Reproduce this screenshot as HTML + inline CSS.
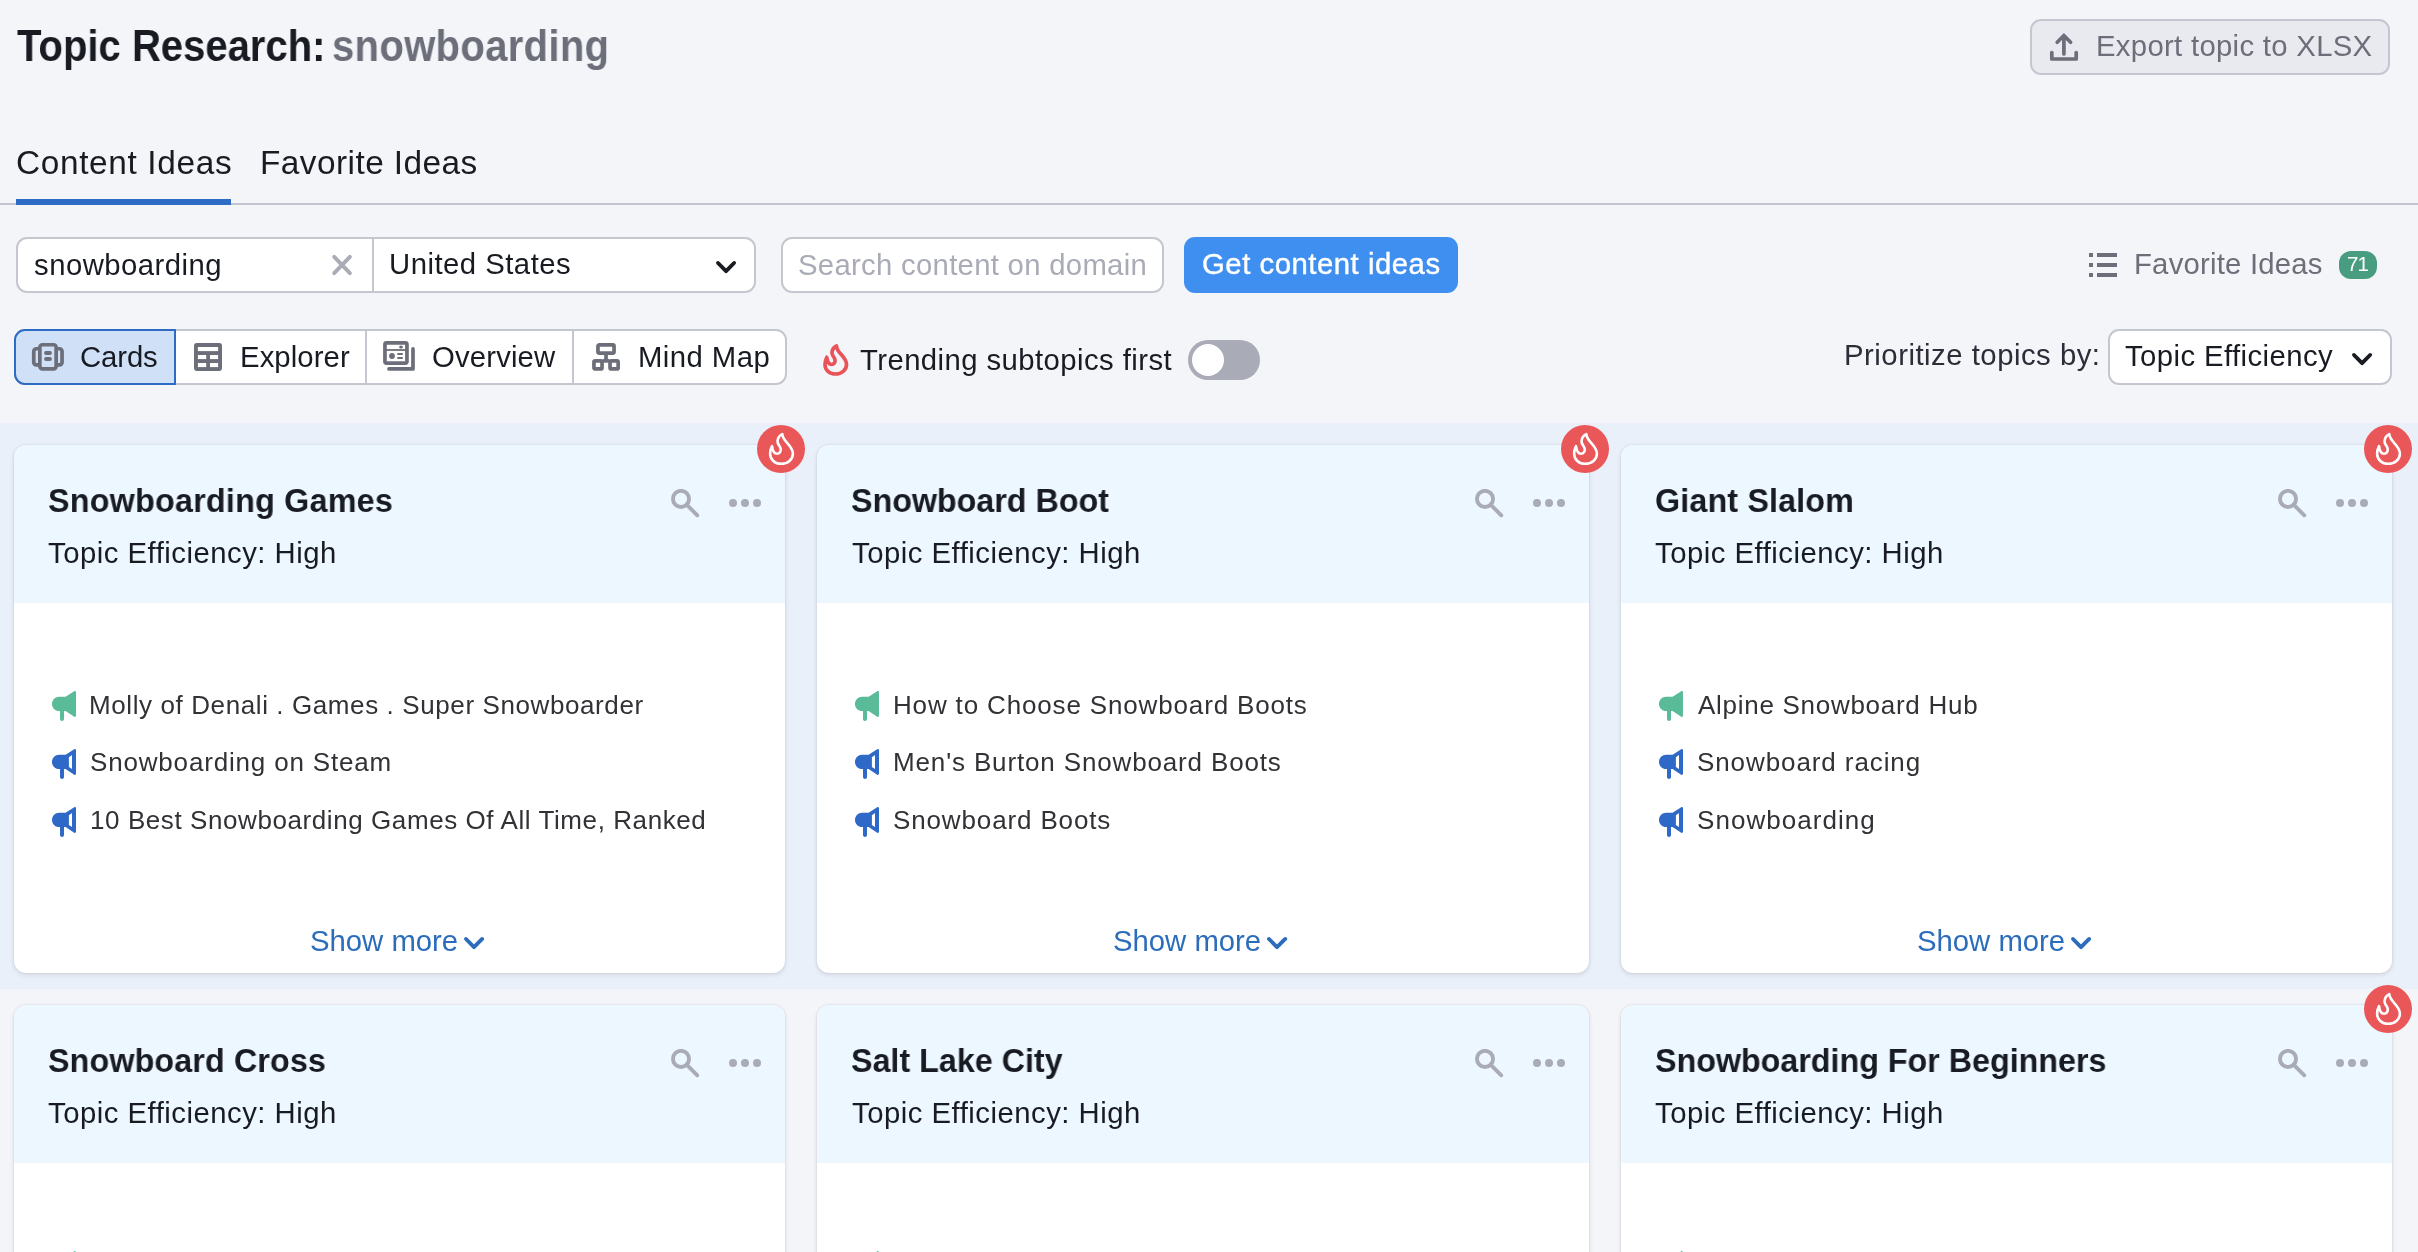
<!DOCTYPE html>
<html lang="en"><head><meta charset="utf-8"><title>Topic Research: snowboarding</title><style>
html,body{margin:0;padding:0}
body{width:2418px;height:1252px;overflow:hidden;position:relative;background:#f4f5f9;font-family:"Liberation Sans",sans-serif}
.a{position:absolute}
.t{position:absolute;white-space:nowrap;line-height:1;will-change:transform}
.band{position:absolute;left:0;top:423px;width:2418px;height:566px;background:#eaf0fa}
.card{position:absolute;background:#fff;border-radius:12px;overflow:hidden;box-shadow:0 0 2px rgba(25,27,35,.16),0 2px 5px rgba(25,27,35,.10)}
.ch{height:158px;background:#edf7ff}
.dot{position:absolute;width:8.1px;height:8.1px;border-radius:50%;background:#a9abb6}
.fc{position:absolute;width:48px;height:48px;border-radius:50%;background:#ea5758}
</style></head><body>
<div class="band"></div>
<div class="a" style="left:0;top:203px;width:2418px;height:2px;background:#c2c5ce"></div>
<div class="a" style="left:16px;top:199px;width:215px;height:6px;background:#2d6bc4"></div>
<div class="a" style="left:2030px;top:19px;width:360px;height:56px;box-sizing:border-box;border:2px solid #c4c7cf;border-radius:11px;background:#e9eaf0"></div>
<svg class="a" style="left:2048px;top:31px" width="32" height="32" viewBox="0 0 32 32"><path d="M15.9 23 L15.9 4.5 M9.2 11.2 L15.9 4.5 L22.6 11.2" fill="none" stroke="#6c6e79" stroke-width="3.7" stroke-linecap="round" stroke-linejoin="miter"/><path d="M3.8 21.5 L3.8 28 L28.2 28 L28.2 21.5" fill="none" stroke="#6c6e79" stroke-width="3.7" stroke-linecap="round" stroke-linejoin="round"/></svg>
<div class="a" style="left:16px;top:237.3px;width:739.5px;height:55.5px;box-sizing:border-box;border:2px solid #c4c7cf;border-radius:11px;background:#fff"></div>
<div class="a" style="left:371.8px;top:238px;width:2px;height:54px;background:#c4c7cf"></div>
<svg class="a" style="left:330px;top:254px" width="24" height="24" viewBox="0 0 24 24"><path d="M4.2 2.9 L19.9 19.1 M19.9 2.9 L4.2 19.1" stroke="#a9abb6" stroke-width="3.9" stroke-linecap="round"/></svg>
<svg class="a" style="left:714.00px;top:258.60px" width="24.10" height="16.20" viewBox="0 0 24.10 16.20"><path d="M4 4 L12.05 12.20 L20.10 4" fill="none" stroke="#191b23" stroke-width="3.9" stroke-linecap="round" stroke-linejoin="round"/></svg>
<div class="a" style="left:780.5px;top:237.3px;width:383.3px;height:55.5px;box-sizing:border-box;border:2px solid #c4c7cf;border-radius:11px;background:#fff"></div>
<div class="a" style="left:1183.7px;top:237px;width:274.3px;height:56px;border-radius:11px;background:#3f8ff0"></div>
<div class="a" style="left:2088.8px;top:253.2px;width:4px;height:3.8px;background:#6c6e79"></div>
<div class="a" style="left:2097px;top:253.2px;width:20.1px;height:3.8px;background:#6c6e79"></div>
<div class="a" style="left:2088.8px;top:263.1px;width:4px;height:3.8px;background:#6c6e79"></div>
<div class="a" style="left:2097px;top:263.1px;width:20.1px;height:3.8px;background:#6c6e79"></div>
<div class="a" style="left:2088.8px;top:273.0px;width:4px;height:3.8px;background:#6c6e79"></div>
<div class="a" style="left:2097px;top:273.0px;width:20.1px;height:3.8px;background:#6c6e79"></div>
<div class="a" style="left:2339px;top:250.7px;width:38px;height:28.2px;border-radius:12px;background:#489d80"></div>
<div class="a" style="left:14.2px;top:329px;width:772.6px;height:56px;box-sizing:border-box;border:2px solid #c4c7cf;border-radius:11px;background:#fff"></div>
<div class="a" style="left:14.2px;top:329px;width:161.6px;height:56px;box-sizing:border-box;border:2px solid #2d6bc4;border-radius:11px 0 0 11px;background:#cfe0f7"></div>
<div class="a" style="left:364.8px;top:331px;width:2px;height:52px;background:#c4c7cf"></div>
<div class="a" style="left:571.9px;top:331px;width:2px;height:52px;background:#c4c7cf"></div>
<svg class="a" style="left:31px;top:342px" width="34" height="30" viewBox="0 0 34 30"><g fill="none" stroke="#6c6e79" stroke-width="3.7"><rect x="2.75" y="6.75" width="10" height="16.2" rx="2.6"/><rect x="21.05" y="6.75" width="10" height="16.2" rx="2.6"/><rect x="8.85" y="2.75" width="16.3" height="24.2" rx="2.6" fill="#cfe0f7"/></g><rect x="13.1" y="9" width="7.8" height="3.9" rx="1.95" fill="#6c6e79"/><rect x="13.1" y="15.1" width="7.8" height="3.9" rx="1.95" fill="#6c6e79"/></svg>
<svg class="a" style="left:194px;top:342.9px" width="28" height="28" viewBox="0 0 28 28"><rect x="0" y="0" width="28" height="27.9" rx="2.8" fill="#6c6e79"/><g fill="#fff"><rect x="3.9" y="4" width="20.2" height="4.1"/><rect x="3.9" y="12" width="8.3" height="4.1"/><rect x="16" y="12" width="8.1" height="4.1"/><rect x="3.9" y="20" width="8.3" height="4.1"/><rect x="16" y="20" width="8.1" height="4.1"/></g></svg>
<svg class="a" style="left:383px;top:341px" width="34" height="31" viewBox="0 0 34 31"><rect x="1.95" y="1.85" width="22" height="20.2" rx="1.6" fill="#fff" stroke="#6c6e79" stroke-width="3.7"/><ellipse cx="18" cy="6" rx="1.9" ry="1.6" fill="#6c6e79"/><rect x="3" y="8.1" width="20" height="1.8" fill="#6c6e79"/><circle cx="9" cy="15" r="2.9" fill="#6c6e79"/><rect x="14.3" y="12.1" width="5.5" height="1.8" rx="0.5" fill="#6c6e79"/><rect x="14.3" y="16.1" width="5.5" height="1.8" rx="0.5" fill="#6c6e79"/><path d="M30 7.9 L30 27.9 L6 27.9" fill="none" stroke="#6c6e79" stroke-width="3.7" stroke-linecap="round" stroke-linejoin="round"/></svg>
<svg class="a" style="left:592px;top:343px" width="29" height="29" viewBox="0 0 29 29"><g fill="#fff" stroke="#6c6e79" stroke-width="3.7"><rect x="5.95" y="1.85" width="16.1" height="8.2" rx="1.3"/><rect x="1.95" y="17.85" width="8.1" height="8.1" rx="1.3"/><rect x="18.05" y="17.85" width="8.1" height="8.1" rx="1.3"/></g><rect x="12.2" y="11.5" width="3.7" height="5" fill="#6c6e79"/><rect x="11" y="16" width="6.2" height="3.7" fill="#6c6e79"/></svg>
<svg class="a" style="left:822.8px;top:343.9px" width="26.00" height="32.00" viewBox="0 0 26 32"><path d="M13.5 2 C13.5 9 23.5 12.5 23.5 20.5 C23.5 26 18.5 30 12.5 30 C6.5 30 2 26 2 20.5 C2 17.5 2.8 15.2 3.8 13.3 C4.2 16.5 5.5 20.5 8.5 20.5 C11 20.5 12.3 18.5 12 16 C11.6 13 8.8 12 9 8.5 C9.2 5.5 11.5 3 13.5 2 Z" fill="none" stroke="#e9545a" stroke-width="3.7" stroke-linejoin="round"/></svg>
<div class="a" style="left:1188px;top:340px;width:72px;height:40px;border-radius:20px;background:#a9abb6"></div>
<div class="a" style="left:1192px;top:344px;width:32px;height:32px;border-radius:16px;background:#fff"></div>
<div class="a" style="left:2107.5px;top:329.2px;width:284px;height:55.5px;box-sizing:border-box;border:2px solid #c4c7cf;border-radius:11px;background:#fff"></div>
<svg class="a" style="left:2350.00px;top:351.10px" width="24.10" height="16.20" viewBox="0 0 24.10 16.20"><path d="M4 4 L12.05 12.20 L20.10 4" fill="none" stroke="#191b23" stroke-width="3.9" stroke-linecap="round" stroke-linejoin="round"/></svg>
<div class="card" style="left:14px;top:445px;width:771px;height:528px"><div class="ch"></div></div><svg class="a" style="left:671.0px;top:489.0px" width="32" height="32" viewBox="0 0 32 32"><circle cx="10" cy="9.9" r="8.05" fill="none" stroke="#a9abb6" stroke-width="3.9"/><path d="M15.6 15.6 L26.3 26.3" stroke="#a9abb6" stroke-width="3.9" stroke-linecap="round"/></svg><div class="dot" style="left:729.0px;top:498.9px"></div><div class="dot" style="left:740.9px;top:498.9px"></div><div class="dot" style="left:752.9px;top:498.9px"></div><div class="fc" style="left:757.0px;top:424.9px"></div><svg class="a" style="left:767.6px;top:431.9px" width="27.56" height="33.92" viewBox="0 0 26 32"><path d="M13.5 2 C13.5 9 23.5 12.5 23.5 20.5 C23.5 26 18.5 30 12.5 30 C6.5 30 2 26 2 20.5 C2 17.5 2.8 15.2 3.8 13.3 C4.2 16.5 5.5 20.5 8.5 20.5 C11 20.5 12.3 18.5 12 16 C11.6 13 8.8 12 9 8.5 C9.2 5.5 11.5 3 13.5 2 Z" fill="none" stroke="#fff" stroke-width="2.45" stroke-linejoin="round"/></svg><svg class="a" style="left:52.0px;top:690.9px" width="26" height="32" viewBox="0 0 26 32"><path d="M22.2 0.3 C23 -0.2 24 0.4 24 1.4 L24 24.6 C24 25.6 23 26.2 22.2 25.7 L13.6 20.1 L12 20.1 L12 28 C12 29.1 11.1 30 10 30 C8.9 30 8 29.1 8 28 L8 20.1 L7.1 20.1 C3.2 20.1 0 16.9 0 13 C0 9 3.2 5.8 7.1 5.8 L13.6 5.8 Z" fill="#59bb97"/></svg><svg class="a" style="left:52.0px;top:749.0px" width="26" height="32" viewBox="0 0 26 32"><path d="M22.2 0.3 C23 -0.2 24 0.4 24 1.4 L24 24.6 C24 25.6 23 26.2 22.2 25.7 L13.6 20.1 L12 20.1 L12 28 C12 29.1 11.1 30 10 30 C8.9 30 8 29.1 8 28 L8 20.1 L7.1 20.1 C3.2 20.1 0 16.9 0 13 C0 9 3.2 5.8 7.1 5.8 L13.6 5.8 Z" fill="#2f69c8"/><path d="M16.9 8.2 L20 6 L20 20 L16.9 17.9 Z" fill="#fff"/></svg><svg class="a" style="left:52.0px;top:807.0px" width="26" height="32" viewBox="0 0 26 32"><path d="M22.2 0.3 C23 -0.2 24 0.4 24 1.4 L24 24.6 C24 25.6 23 26.2 22.2 25.7 L13.6 20.1 L12 20.1 L12 28 C12 29.1 11.1 30 10 30 C8.9 30 8 29.1 8 28 L8 20.1 L7.1 20.1 C3.2 20.1 0 16.9 0 13 C0 9 3.2 5.8 7.1 5.8 L13.6 5.8 Z" fill="#2f69c8"/><path d="M16.9 8.2 L20 6 L20 20 L16.9 17.9 Z" fill="#fff"/></svg><svg class="a" style="left:462.00px;top:934.60px" width="24.20" height="16.20" viewBox="0 0 24.20 16.20"><path d="M4 4 L12.00 12.20 L20.20 4" fill="none" stroke="#2c6dbb" stroke-width="3.9" stroke-linecap="round" stroke-linejoin="round"/></svg>
<div class="card" style="left:817px;top:445px;width:772px;height:528px"><div class="ch"></div></div><svg class="a" style="left:1475.0px;top:489.0px" width="32" height="32" viewBox="0 0 32 32"><circle cx="10" cy="9.9" r="8.05" fill="none" stroke="#a9abb6" stroke-width="3.9"/><path d="M15.6 15.6 L26.3 26.3" stroke="#a9abb6" stroke-width="3.9" stroke-linecap="round"/></svg><div class="dot" style="left:1533.0px;top:498.9px"></div><div class="dot" style="left:1544.9px;top:498.9px"></div><div class="dot" style="left:1556.9px;top:498.9px"></div><div class="fc" style="left:1561.0px;top:424.9px"></div><svg class="a" style="left:1571.6px;top:431.9px" width="27.56" height="33.92" viewBox="0 0 26 32"><path d="M13.5 2 C13.5 9 23.5 12.5 23.5 20.5 C23.5 26 18.5 30 12.5 30 C6.5 30 2 26 2 20.5 C2 17.5 2.8 15.2 3.8 13.3 C4.2 16.5 5.5 20.5 8.5 20.5 C11 20.5 12.3 18.5 12 16 C11.6 13 8.8 12 9 8.5 C9.2 5.5 11.5 3 13.5 2 Z" fill="none" stroke="#fff" stroke-width="2.45" stroke-linejoin="round"/></svg><svg class="a" style="left:855.4px;top:690.9px" width="26" height="32" viewBox="0 0 26 32"><path d="M22.2 0.3 C23 -0.2 24 0.4 24 1.4 L24 24.6 C24 25.6 23 26.2 22.2 25.7 L13.6 20.1 L12 20.1 L12 28 C12 29.1 11.1 30 10 30 C8.9 30 8 29.1 8 28 L8 20.1 L7.1 20.1 C3.2 20.1 0 16.9 0 13 C0 9 3.2 5.8 7.1 5.8 L13.6 5.8 Z" fill="#59bb97"/></svg><svg class="a" style="left:855.4px;top:749.0px" width="26" height="32" viewBox="0 0 26 32"><path d="M22.2 0.3 C23 -0.2 24 0.4 24 1.4 L24 24.6 C24 25.6 23 26.2 22.2 25.7 L13.6 20.1 L12 20.1 L12 28 C12 29.1 11.1 30 10 30 C8.9 30 8 29.1 8 28 L8 20.1 L7.1 20.1 C3.2 20.1 0 16.9 0 13 C0 9 3.2 5.8 7.1 5.8 L13.6 5.8 Z" fill="#2f69c8"/><path d="M16.9 8.2 L20 6 L20 20 L16.9 17.9 Z" fill="#fff"/></svg><svg class="a" style="left:855.4px;top:807.0px" width="26" height="32" viewBox="0 0 26 32"><path d="M22.2 0.3 C23 -0.2 24 0.4 24 1.4 L24 24.6 C24 25.6 23 26.2 22.2 25.7 L13.6 20.1 L12 20.1 L12 28 C12 29.1 11.1 30 10 30 C8.9 30 8 29.1 8 28 L8 20.1 L7.1 20.1 C3.2 20.1 0 16.9 0 13 C0 9 3.2 5.8 7.1 5.8 L13.6 5.8 Z" fill="#2f69c8"/><path d="M16.9 8.2 L20 6 L20 20 L16.9 17.9 Z" fill="#fff"/></svg><svg class="a" style="left:1265.40px;top:934.60px" width="24.20" height="16.20" viewBox="0 0 24.20 16.20"><path d="M4 4 L12.00 12.20 L20.20 4" fill="none" stroke="#2c6dbb" stroke-width="3.9" stroke-linecap="round" stroke-linejoin="round"/></svg>
<div class="card" style="left:1621px;top:445px;width:771px;height:528px"><div class="ch"></div></div><svg class="a" style="left:2278.0px;top:489.0px" width="32" height="32" viewBox="0 0 32 32"><circle cx="10" cy="9.9" r="8.05" fill="none" stroke="#a9abb6" stroke-width="3.9"/><path d="M15.6 15.6 L26.3 26.3" stroke="#a9abb6" stroke-width="3.9" stroke-linecap="round"/></svg><div class="dot" style="left:2335.9px;top:498.9px"></div><div class="dot" style="left:2347.8px;top:498.9px"></div><div class="dot" style="left:2359.8px;top:498.9px"></div><div class="fc" style="left:2364.0px;top:424.9px"></div><svg class="a" style="left:2374.6px;top:431.9px" width="27.56" height="33.92" viewBox="0 0 26 32"><path d="M13.5 2 C13.5 9 23.5 12.5 23.5 20.5 C23.5 26 18.5 30 12.5 30 C6.5 30 2 26 2 20.5 C2 17.5 2.8 15.2 3.8 13.3 C4.2 16.5 5.5 20.5 8.5 20.5 C11 20.5 12.3 18.5 12 16 C11.6 13 8.8 12 9 8.5 C9.2 5.5 11.5 3 13.5 2 Z" fill="none" stroke="#fff" stroke-width="2.45" stroke-linejoin="round"/></svg><svg class="a" style="left:1659.0px;top:690.9px" width="26" height="32" viewBox="0 0 26 32"><path d="M22.2 0.3 C23 -0.2 24 0.4 24 1.4 L24 24.6 C24 25.6 23 26.2 22.2 25.7 L13.6 20.1 L12 20.1 L12 28 C12 29.1 11.1 30 10 30 C8.9 30 8 29.1 8 28 L8 20.1 L7.1 20.1 C3.2 20.1 0 16.9 0 13 C0 9 3.2 5.8 7.1 5.8 L13.6 5.8 Z" fill="#59bb97"/></svg><svg class="a" style="left:1659.0px;top:749.0px" width="26" height="32" viewBox="0 0 26 32"><path d="M22.2 0.3 C23 -0.2 24 0.4 24 1.4 L24 24.6 C24 25.6 23 26.2 22.2 25.7 L13.6 20.1 L12 20.1 L12 28 C12 29.1 11.1 30 10 30 C8.9 30 8 29.1 8 28 L8 20.1 L7.1 20.1 C3.2 20.1 0 16.9 0 13 C0 9 3.2 5.8 7.1 5.8 L13.6 5.8 Z" fill="#2f69c8"/><path d="M16.9 8.2 L20 6 L20 20 L16.9 17.9 Z" fill="#fff"/></svg><svg class="a" style="left:1659.0px;top:807.0px" width="26" height="32" viewBox="0 0 26 32"><path d="M22.2 0.3 C23 -0.2 24 0.4 24 1.4 L24 24.6 C24 25.6 23 26.2 22.2 25.7 L13.6 20.1 L12 20.1 L12 28 C12 29.1 11.1 30 10 30 C8.9 30 8 29.1 8 28 L8 20.1 L7.1 20.1 C3.2 20.1 0 16.9 0 13 C0 9 3.2 5.8 7.1 5.8 L13.6 5.8 Z" fill="#2f69c8"/><path d="M16.9 8.2 L20 6 L20 20 L16.9 17.9 Z" fill="#fff"/></svg><svg class="a" style="left:2069.00px;top:934.60px" width="24.20" height="16.20" viewBox="0 0 24.20 16.20"><path d="M4 4 L12.00 12.20 L20.20 4" fill="none" stroke="#2c6dbb" stroke-width="3.9" stroke-linecap="round" stroke-linejoin="round"/></svg>
<div class="card" style="left:14px;top:1005px;width:771px;height:400px"><div class="ch"></div></div><svg class="a" style="left:671.0px;top:1049.0px" width="32" height="32" viewBox="0 0 32 32"><circle cx="10" cy="9.9" r="8.05" fill="none" stroke="#a9abb6" stroke-width="3.9"/><path d="M15.6 15.6 L26.3 26.3" stroke="#a9abb6" stroke-width="3.9" stroke-linecap="round"/></svg><div class="dot" style="left:729.0px;top:1059.0px"></div><div class="dot" style="left:740.9px;top:1059.0px"></div><div class="dot" style="left:752.9px;top:1059.0px"></div><svg class="a" style="left:52.0px;top:1250.9px" width="26" height="32" viewBox="0 0 26 32"><path d="M22.2 0.3 C23 -0.2 24 0.4 24 1.4 L24 24.6 C24 25.6 23 26.2 22.2 25.7 L13.6 20.1 L12 20.1 L12 28 C12 29.1 11.1 30 10 30 C8.9 30 8 29.1 8 28 L8 20.1 L7.1 20.1 C3.2 20.1 0 16.9 0 13 C0 9 3.2 5.8 7.1 5.8 L13.6 5.8 Z" fill="#59bb97"/></svg>
<div class="card" style="left:817px;top:1005px;width:772px;height:400px"><div class="ch"></div></div><svg class="a" style="left:1475.0px;top:1049.0px" width="32" height="32" viewBox="0 0 32 32"><circle cx="10" cy="9.9" r="8.05" fill="none" stroke="#a9abb6" stroke-width="3.9"/><path d="M15.6 15.6 L26.3 26.3" stroke="#a9abb6" stroke-width="3.9" stroke-linecap="round"/></svg><div class="dot" style="left:1533.0px;top:1059.0px"></div><div class="dot" style="left:1544.9px;top:1059.0px"></div><div class="dot" style="left:1556.9px;top:1059.0px"></div><svg class="a" style="left:855.4px;top:1250.9px" width="26" height="32" viewBox="0 0 26 32"><path d="M22.2 0.3 C23 -0.2 24 0.4 24 1.4 L24 24.6 C24 25.6 23 26.2 22.2 25.7 L13.6 20.1 L12 20.1 L12 28 C12 29.1 11.1 30 10 30 C8.9 30 8 29.1 8 28 L8 20.1 L7.1 20.1 C3.2 20.1 0 16.9 0 13 C0 9 3.2 5.8 7.1 5.8 L13.6 5.8 Z" fill="#59bb97"/></svg>
<div class="card" style="left:1621px;top:1005px;width:771px;height:400px"><div class="ch"></div></div><svg class="a" style="left:2278.0px;top:1049.0px" width="32" height="32" viewBox="0 0 32 32"><circle cx="10" cy="9.9" r="8.05" fill="none" stroke="#a9abb6" stroke-width="3.9"/><path d="M15.6 15.6 L26.3 26.3" stroke="#a9abb6" stroke-width="3.9" stroke-linecap="round"/></svg><div class="dot" style="left:2335.9px;top:1059.0px"></div><div class="dot" style="left:2347.8px;top:1059.0px"></div><div class="dot" style="left:2359.8px;top:1059.0px"></div><div class="fc" style="left:2364.0px;top:984.9px"></div><svg class="a" style="left:2374.6px;top:991.9px" width="27.56" height="33.92" viewBox="0 0 26 32"><path d="M13.5 2 C13.5 9 23.5 12.5 23.5 20.5 C23.5 26 18.5 30 12.5 30 C6.5 30 2 26 2 20.5 C2 17.5 2.8 15.2 3.8 13.3 C4.2 16.5 5.5 20.5 8.5 20.5 C11 20.5 12.3 18.5 12 16 C11.6 13 8.8 12 9 8.5 C9.2 5.5 11.5 3 13.5 2 Z" fill="none" stroke="#fff" stroke-width="2.45" stroke-linejoin="round"/></svg><svg class="a" style="left:1659.0px;top:1250.9px" width="26" height="32" viewBox="0 0 26 32"><path d="M22.2 0.3 C23 -0.2 24 0.4 24 1.4 L24 24.6 C24 25.6 23 26.2 22.2 25.7 L13.6 20.1 L12 20.1 L12 28 C12 29.1 11.1 30 10 30 C8.9 30 8 29.1 8 28 L8 20.1 L7.1 20.1 C3.2 20.1 0 16.9 0 13 C0 9 3.2 5.8 7.1 5.8 L13.6 5.8 Z" fill="#59bb97"/></svg>
<span class="t" id="t0" style="left:17.04px;top:24.7px;font-size:43.5px;font-weight:700;color:#191b23;letter-spacing:0.006px;transform:scaleX(0.92);transform-origin:0 0;">Topic Research:</span>
<span class="t" id="t1" style="left:332.42px;top:24.7px;font-size:43.5px;font-weight:700;color:#6c6e79;letter-spacing:0.357px;transform:scaleX(0.92);transform-origin:0 0;">snowboarding</span>
<span class="t" id="t2" style="left:15.95px;top:145.7px;font-size:33.4px;font-weight:400;color:#191b23;letter-spacing:0.640px;">Content Ideas</span>
<span class="t" id="t3" style="left:260.31px;top:145.7px;font-size:33.4px;font-weight:400;color:#191b23;letter-spacing:0.441px;">Favorite Ideas</span>
<span class="t" id="t4" style="left:34.33px;top:250.2px;font-size:29.3px;font-weight:400;color:#191b23;letter-spacing:0.477px;">snowboarding</span>
<span class="t" id="t5" style="left:388.94px;top:249.2px;font-size:29.3px;font-weight:400;color:#191b23;letter-spacing:0.483px;">United States</span>
<span class="t" id="t6" style="left:798.20px;top:250.2px;font-size:29.3px;font-weight:400;color:#a9abb6;letter-spacing:0.293px;">Search content on domain</span>
<span class="t" id="t7" style="left:1201.74px;top:249.2px;font-size:29.3px;font-weight:400;color:#ffffff;letter-spacing:0.524px;-webkit-text-stroke:0.4px #fff;">Get content ideas</span>
<span class="t" id="t8" style="left:2134.10px;top:249.2px;font-size:29.3px;font-weight:400;color:#6c6e79;letter-spacing:0.219px;">Favorite Ideas</span>
<span class="t" id="t9" style="left:2347.20px;top:254.4px;font-size:20.5px;font-weight:400;color:#ffffff;letter-spacing:0.000px;letter-spacing:-0.8px;">71</span>
<span class="t" id="t10" style="left:2095.94px;top:31.2px;font-size:29.3px;font-weight:400;color:#6c6e79;letter-spacing:0.306px;">Export topic to XLSX</span>
<span class="t" id="t11" style="left:80.20px;top:341.9px;font-size:29.3px;font-weight:400;color:#191b23;letter-spacing:-0.106px;">Cards</span>
<span class="t" id="t12" style="left:239.94px;top:341.9px;font-size:29.3px;font-weight:400;color:#191b23;letter-spacing:0.092px;">Explorer</span>
<span class="t" id="t13" style="left:431.70px;top:341.9px;font-size:29.3px;font-weight:400;color:#191b23;letter-spacing:0.163px;">Overview</span>
<span class="t" id="t14" style="left:637.52px;top:341.9px;font-size:29.3px;font-weight:400;color:#191b23;letter-spacing:0.440px;">Mind Map</span>
<span class="t" id="t15" style="left:859.50px;top:345.2px;font-size:29.3px;font-weight:400;color:#191b23;letter-spacing:0.428px;">Trending subtopics first</span>
<span class="t" id="t16" style="left:1844.06px;top:340.2px;font-size:29.3px;font-weight:400;color:#2b2e38;letter-spacing:0.508px;">Prioritize topics by:</span>
<span class="t" id="t17" style="left:2125.49px;top:341.2px;font-size:29.3px;font-weight:400;color:#191b23;letter-spacing:0.420px;">Topic Efficiency</span>
<span class="t" id="t18" style="left:48.20px;top:483.6px;font-size:33.6px;font-weight:700;color:#191b23;letter-spacing:0.275px;transform:scaleX(0.96);transform-origin:0 0;">Snowboarding Games</span>
<span class="t" id="t19" style="left:48.49px;top:537.9px;font-size:29.3px;font-weight:400;color:#191b23;letter-spacing:0.495px;">Topic Efficiency: High</span>
<span class="t" id="t20" style="left:89.48px;top:691.9px;font-size:26px;font-weight:400;color:#323236;letter-spacing:0.600px;">Molly of Denali . Games . Super Snowboarder</span>
<span class="t" id="t21" style="left:90.02px;top:748.8px;font-size:26px;font-weight:400;color:#323236;letter-spacing:0.821px;">Snowboarding on Steam</span>
<span class="t" id="t22" style="left:89.54px;top:806.7px;font-size:26px;font-weight:400;color:#323236;letter-spacing:0.581px;">10 Best Snowboarding Games Of All Time, Ranked</span>
<span class="t" id="t23" style="left:309.74px;top:925.9px;font-size:29.3px;font-weight:400;color:#2c6dbb;letter-spacing:-0.002px;">Show more</span>
<span class="t" id="t24" style="left:851.28px;top:483.6px;font-size:33.6px;font-weight:700;color:#191b23;letter-spacing:0.008px;transform:scaleX(0.96);transform-origin:0 0;">Snowboard Boot</span>
<span class="t" id="t25" style="left:851.57px;top:537.9px;font-size:29.3px;font-weight:400;color:#191b23;letter-spacing:0.495px;">Topic Efficiency: High</span>
<span class="t" id="t26" style="left:892.56px;top:691.9px;font-size:26px;font-weight:400;color:#323236;letter-spacing:0.844px;">How to Choose Snowboard Boots</span>
<span class="t" id="t27" style="left:892.56px;top:748.8px;font-size:26px;font-weight:400;color:#323236;letter-spacing:0.853px;">Men's Burton Snowboard Boots</span>
<span class="t" id="t28" style="left:893.10px;top:806.7px;font-size:26px;font-weight:400;color:#323236;letter-spacing:0.864px;">Snowboard Boots</span>
<span class="t" id="t29" style="left:1112.82px;top:925.9px;font-size:29.3px;font-weight:400;color:#2c6dbb;letter-spacing:-0.002px;">Show more</span>
<span class="t" id="t30" style="left:1655.20px;top:483.6px;font-size:33.6px;font-weight:700;color:#191b23;letter-spacing:0.170px;transform:scaleX(0.96);transform-origin:0 0;">Giant Slalom</span>
<span class="t" id="t31" style="left:1655.49px;top:537.9px;font-size:29.3px;font-weight:400;color:#191b23;letter-spacing:0.495px;">Topic Efficiency: High</span>
<span class="t" id="t32" style="left:1698.08px;top:691.9px;font-size:26px;font-weight:400;color:#323236;letter-spacing:0.718px;">Alpine Snowboard Hub</span>
<span class="t" id="t33" style="left:1697.02px;top:748.8px;font-size:26px;font-weight:400;color:#323236;letter-spacing:0.906px;">Snowboard racing</span>
<span class="t" id="t34" style="left:1697.02px;top:806.7px;font-size:26px;font-weight:400;color:#323236;letter-spacing:1.052px;">Snowboarding</span>
<span class="t" id="t35" style="left:1916.74px;top:925.9px;font-size:29.3px;font-weight:400;color:#2c6dbb;letter-spacing:-0.002px;">Show more</span>
<span class="t" id="t36" style="left:48.20px;top:1043.6px;font-size:33.6px;font-weight:700;color:#191b23;letter-spacing:0.155px;transform:scaleX(0.96);transform-origin:0 0;">Snowboard Cross</span>
<span class="t" id="t37" style="left:48.49px;top:1097.9px;font-size:29.3px;font-weight:400;color:#191b23;letter-spacing:0.495px;">Topic Efficiency: High</span>
<span class="t" id="t38" style="left:851.28px;top:1043.6px;font-size:33.6px;font-weight:700;color:#191b23;letter-spacing:0.020px;transform:scaleX(0.96);transform-origin:0 0;">Salt Lake City</span>
<span class="t" id="t39" style="left:851.57px;top:1097.9px;font-size:29.3px;font-weight:400;color:#191b23;letter-spacing:0.495px;">Topic Efficiency: High</span>
<span class="t" id="t40" style="left:1655.20px;top:1043.6px;font-size:33.6px;font-weight:700;color:#191b23;letter-spacing:0.005px;transform:scaleX(0.96);transform-origin:0 0;">Snowboarding For Beginners</span>
<span class="t" id="t41" style="left:1655.49px;top:1097.9px;font-size:29.3px;font-weight:400;color:#191b23;letter-spacing:0.495px;">Topic Efficiency: High</span>
</body></html>
